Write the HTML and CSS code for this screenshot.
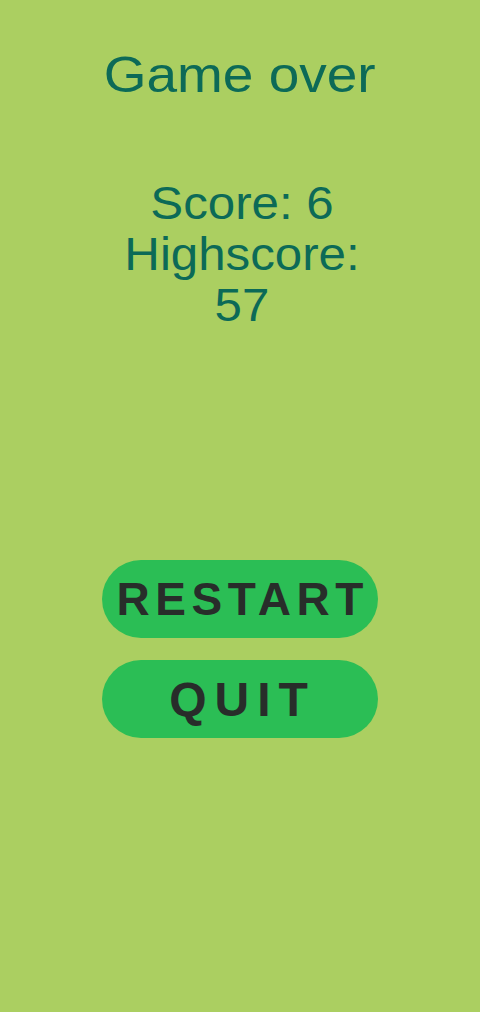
FILE: index.html
```html
<!DOCTYPE html>
<html lang="en">
<head>
    <meta charset="UTF-8">
    <meta name="viewport" content="width=device-width, initial-scale=1.0">
    <title>Game over</title>
<link rel="stylesheet" href="styles.css">
</head>
<body>
    <div class="screen">
        <h1 class="title">Game over</h1>
        <p class="stats">Score: 6<br>Highscore: 57</p>
        <div class="menu">
            <button class="btn">RESTART</button>
            <button class="btn btn-quit">QUIT</button>
        </div>
    </div>
</body>
</html>
```

FILE: styles.css
```css
    body {
        font-family: "Liberation Sans", Arial, sans-serif;
        background-color: #abcf61;
        color: #0c6a57;
        margin: 0;
        padding: 0;
        height: 1012px;
    }
    .screen {
        display: flex;
        flex-direction: column;
        align-items: center;
        padding-top: 46px;
        text-align: center;
    }
    .title {
        font-size: 50px;
        font-weight: normal;
        line-height: 58px;
        margin: 0;
        transform: scaleX(1.1);
    }
    .stats {
        font-size: 46px;
        line-height: 51px;
        width: 240px;
        margin: 74px 0 0 4px;
        transform: scaleX(1.07);
    }
    .menu {
        display: flex;
        flex-direction: column;
        gap: 22px;
        margin-top: 229px;
    }
    .btn {
        width: 276px;
        height: 78px;
        border: none;
        border-radius: 39px;
        background-color: #2bbe55;
        color: #282d2a;
        font-family: "Liberation Sans", Arial, sans-serif;
        font-size: 46px;
        font-weight: bold;
        letter-spacing: 5.5px;
        padding: 0 0 0 5.5px;
        cursor: pointer;
    }
    .btn-quit {
        font-size: 48px;
        letter-spacing: 8px;
        padding-left: 5px;
    }
```
